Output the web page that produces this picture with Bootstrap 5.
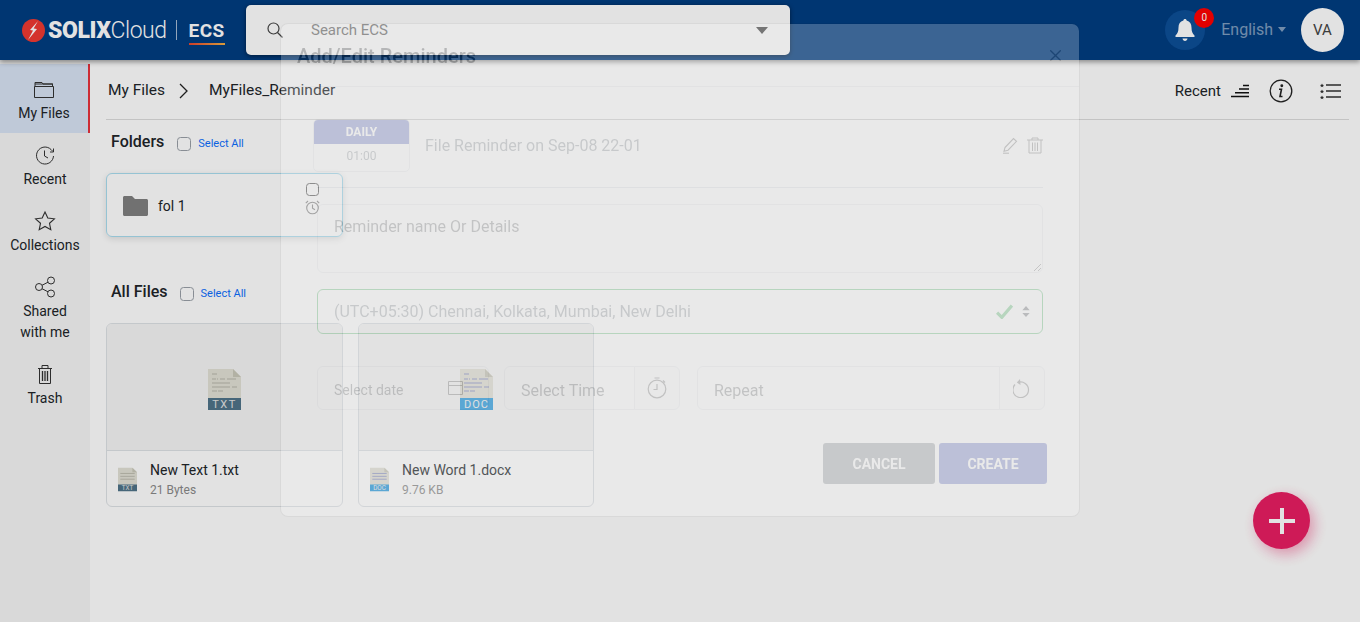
<!DOCTYPE html>
<html>
<head>
  <meta charset="utf-8">
  <title>My Files</title>
  <link href="https://cdn.jsdelivr.net/npm/bootstrap@5.3.0/dist/css/bootstrap.min.css" rel="stylesheet">
  <style>
    html, body { height: 100%; overflow: hidden; }
    body { font-family: Roboto, "Liberation Sans", sans-serif; font-size: 14px; color: #212529; background: #fff; }

    /* top bar */
    .top-bar { height: 60px; background: #003d81; box-shadow: 0 2px 5px rgba(0,0,0,.4); position: relative; z-index: 5; }
    .brand-wrap { width: 246px; padding-left: 22px; }
    .brand-name { font-size: 23px; color: #fff; margin-left: 3px; letter-spacing: -.5px; line-height: 1; }
    .brand-name b { font-weight: 900; letter-spacing: -.4px; }
    .brand-name span { font-weight: 300; }
    .brand-sep { width: 1px; height: 20px; background: rgba(255,255,255,.65); margin: 0 12px 0 9px; }
    .brand-ecs { font-size: 19px; font-weight: 700; color: #fff; letter-spacing: .5px; line-height: 1; padding: 3px 0 3px; border-bottom: 2px solid; border-image: linear-gradient(90deg,#e8432e,#f5b342) 1; margin-top: 2px; }
    .search-box { width: 544px; height: 50px; background: #fff; border-radius: 5px; box-shadow: 0 1px 4px rgba(0,0,0,.5); padding: 0 22px 0 21px; }
    .search-box span { color: #7d7d7d; font-size: 15px; margin-left: 28px; flex-grow: 1; }
    .search-caret { width: 0; height: 0; border: 6.5px solid transparent; border-top: 7px solid #555; border-bottom: 0; }
    .bell-wrap { width: 40px; height: 40px; border-radius: 50%; background: #0d4f98; position: relative; margin-right: 16px; }
    .bell-count { position: absolute; top: -2px; right: -9px; width: 20px; height: 20px; border-radius: 50%; background: #f00; color: #fff; font-size: 10px; text-align: center; line-height: 20px; }
    .lang-pick { color: rgba(255,255,255,.5); font-size: 16px; margin-right: 15px; }
    .lang-pick::after { content: ""; display: inline-block; margin-left: 5px; vertical-align: 3px; border: 4.5px solid transparent; border-top: 5px solid rgba(255,255,255,.5); border-bottom: 0; }
    .avatar-dot { width: 43px; height: 44px; border-radius: 50%; background: #fff; color: #444; font-size: 15px; margin-right: 16px; }

    /* left rail */
    .side-rail { width: 90px; background: #f5f5f5; padding-top: 4px; height: 562px; flex-shrink: 0; }
    .rail-item { padding: 10px 0 9px; text-align: center; line-height: 21px; }
    .rail-item svg { display: block; margin: 0 auto 2px; }
    .rail-item.active-rail { background: #d8e3f4; border-right: 2px solid #e8323c; padding: 13px 0 9px; }

    /* main */
    .main-col { padding: 0 11px 0 16px; }
    .crumb-row { height: 60px; border-bottom: 1px solid #dcdcdc; padding: 3px 0 0 2px; font-size: 15.5px; }
    .crumb-arrow { margin: 0 21px 0 14px; }
    .crumb-sort { font-size: 15px; }
    .sort-mark { margin: 0 20px 0 10px; }
    .info-mark { margin-right: 3px; }
    .sect-row { height: 22px; padding-left: 5px; }
    .sect-title { font-size: 16px; font-weight: 500; margin-right: 13px; }
    .sect-row .form-check-input { width: 14px; height: 14px; margin: 3px 7px 0 0; border-color: #9aa0a8; }
    .select-all { font-size: 11px; color: #0d6efd; text-decoration: none; margin-top: 4px; }
    .folder-head { margin-top: 11px; }
    .files-head { margin-top: 44px; }
    .files-head .sect-title { margin-right: 12px; }
    .folder-tile { width: 237px; height: 64px; margin-top: 20px; border: 1px solid #a9dcef; border-radius: 6px; box-shadow: 0 2px 6px rgba(0,0,0,.12); padding: 2px 22px 0 16px; }
    .folder-name { margin-left: 10px; }
    .folder-side { width: 15px; margin-top: -14px; }
    .folder-side .form-check-input { display: block; width: 13px; height: 13px; margin: 0 0 4px 1px; border-color: #777; }
    .files-grid { gap: 15px; margin-top: 20px; }
    .file-tile { height: 184px; border-color: #dee2e6; overflow: hidden; }
    .file-thumb { height: 127px; background: #f5f5f5; border-bottom: 1px solid #dee2e6; padding-top: 5px; }
    .file-meta { padding: 9px 0 0 11px; }
    .file-meta svg { margin-top: 7px; margin-right: 13px; }
    .file-name { font-size: 14px; line-height: 20px; }
    .file-size { font-size: 12px; color: #8a8a8a; line-height: 20px; }
    .add-fab { position: fixed; left: 1253px; top: 492px; width: 57px; height: 57px; border-radius: 50%; background: #e91e63; box-shadow: 4px 5px 14px rgba(233,30,99,.4); }

    /* modal, caught while fading in */
    .modal-backdrop.show { opacity: .115; }
    .fading-modal { opacity: .23; overflow: hidden; }
    .fading-modal .modal-dialog { margin: 23px auto 0; }
    .fading-modal .modal-header { height: 63px; }
    .fading-modal .modal-title { padding-top: 2px; }
    .fading-modal .btn-close { width: 11px; height: 11px; background-size: 11px; margin-right: -6px; }
    .slot-row { margin: 32px 36px 0 32px; }
    .slot-date { width: 97px; height: 53px; border: 1px solid #dee2e6; border-radius: 5px; overflow: hidden; text-align: center; }
    .slot-date b { display: block; height: 24px; line-height: 24px; background: #3f51b5; color: #fff; font-size: 12px; }
    .slot-date span { display: block; line-height: 25px; font-size: 12px; color: #6c757d; }
    .slot-title { font-size: 16px; color: #6c757d; margin-left: 15px; }
    .slot-trash { margin-left: 9px; }
    .slot-line { margin: 15px 36px 0 36px; border-top: 1px solid #ced4da; }
    .form-stack { margin: 16px 36px 0; }
    .form-stack textarea { height: 69px; padding: 10px 16px 0; }
    .form-stack .form-control, .form-stack .form-select { font-size: 16px; }
    .zone-select.form-select { height: 45px; margin-top: 16px; padding-left: 16px; color: #6c757d; border-color: #28a745;
      background-image: url("data:image/svg+xml,%3csvg xmlns='http://www.w3.org/2000/svg' viewBox='0 0 8 12'%3e%3cpath fill='%23343a40' d='M4 0 8 4.500H0zM4 12 0 7.500h8z'/%3e%3c/svg%3e"), url("data:image/svg+xml,%3csvg xmlns='http://www.w3.org/2000/svg' viewBox='0 0 16 14'%3e%3cpath fill='none' stroke='%2328a745' stroke-width='3' d='M1 8l4.500 4.500L15 1.500'/%3e%3c/svg%3e");
      background-position: right 12px center, right 29px center; background-size: 8px 11px, 17px 15px; background-repeat: no-repeat; }
    .time-row { margin: 32px 34px 0 36px; }
    .time-row .form-control { height: 44px; padding: 8px 16px 4px; }
    .date-wrap { width: 172px; position: relative; margin-right: 15px; }
    .date-wrap .form-control { font-size: 14px; }
    .date-wrap svg { position: absolute; right: 26px; top: 14px; }
    .time-wrap { width: 176px; margin-right: 17px; }
    .repeat-wrap { width: 348px; }
    .time-row .input-group-text { width: 46px; justify-content: center; padding: 0; }
    .btn-row { margin: 33px 32px 32px 0; }
    .btn-row .btn { height: 41px; font-size: 14px; font-weight: 700; border: 0; border-radius: 3px; padding-top: 8px; }
    .btn-cancel { width: 112px; margin-right: 4px; }
    .btn-create { width: 108px; background: #3f51b5; color: #fff; }
    .btn-create:hover { background: #3f51b5; color: #fff; }
  </style>
</head>
<body>

<header class="top-bar d-flex align-items-center">
  <div class="brand-wrap d-flex align-items-center">
    <svg width="23" height="23" viewBox="0 0 23 23"><circle cx="11.5" cy="11.5" r="11.5" fill="#f03a32"/><path d="M16 2 8 11l3 .5L6 21l9-11-3.400-.5z" fill="#fff"/></svg>
    <div class="brand-name"><b>SOLIX</b><span>Cloud</span></div>
    <div class="brand-sep"></div>
    <div class="brand-ecs">ECS</div>
  </div>
  <div class="search-box d-flex align-items-center">
    <svg width="16" height="16" viewBox="0 0 16 16" fill="none" stroke="#444" stroke-width="1.200"><circle cx="6.500" cy="6.500" r="5.500"/><path d="M10.500 10.500 15.500 15.500"/></svg>
    <span>Search ECS</span>
    <div class="search-caret"></div>
  </div>
  <div class="ms-auto d-flex align-items-center">
    <div class="bell-wrap d-flex align-items-center justify-content-center">
      <svg width="20" height="24" viewBox="0 0 20 24" fill="#fff"><path d="M10 1c1 0 1.600.7 1.600 1.600C15 3.400 16.500 6 16.500 9.500c0 4 1 6 3 8v1.500H.5v-1.500c2-2 3-4 3-8C3.500 6 5 3.400 8.400 2.600 8.400 1.700 9 1 10 1z"/><path d="M7.500 20.500h5C12.300 22 11.300 23 10 23s-2.300-1-2.500-2.500z"/></svg>
      <div class="bell-count">0</div>
    </div>
    <div class="lang-pick">English</div>
    <div class="avatar-dot d-flex align-items-center justify-content-center">VA</div>
  </div>
</header>

<div class="d-flex">
  <nav class="side-rail">
    <div class="rail-item active-rail">
      <svg width="24" height="24" viewBox="0 0 24 24" fill="none" stroke="#333" stroke-width="1"><path d="M3 7V5.500h7l1 1.500h9.500v2"/><path d="M2.500 9.500h19v11h-19z"/><path d="M3 9.500V7h18"/></svg>
      My Files
    </div>
    <div class="rail-item">
      <svg width="24" height="24" viewBox="0 0 24 24" fill="none" stroke="#333" stroke-width="1"><path d="M20.500 13a8.500 8.500 0 1 1-2.500-6.500l2 2"/><path d="M20.500 5.500v3.500H17"/><path d="M11.500 7.500V13l3.500 2"/></svg>
      Recent
    </div>
    <div class="rail-item">
      <svg width="24" height="24" viewBox="0 0 24 24" fill="none" stroke="#333" stroke-width="1.100"><path d="M12 3l2.800 6 6.600.8-4.900 4.500 1.300 6.500L12 17.500 6.200 20.800l1.300-6.500L2.600 9.800 9.200 9z"/></svg>
      Collections
    </div>
    <div class="rail-item">
      <svg width="24" height="24" viewBox="0 0 24 24" fill="none" stroke="#333" stroke-width="1"><circle cx="18" cy="5.500" r="3.500"/><circle cx="18" cy="18.500" r="3.500"/><circle cx="6" cy="12" r="3.500"/><path d="M9 10.300 15 7.200M9 13.700l6 3.100"/></svg>
      Shared<br>with me
    </div>
    <div class="rail-item">
      <svg width="24" height="24" viewBox="0 0 24 24" fill="none" stroke="#333" stroke-width="1"><path d="M5 6.500h14M9 6V3.500h6V6M6.500 6.500v15h11v-15"/><path d="M9.500 9v10M12 9v10M14.500 9v10" stroke-width="1.300"/></svg>
      Trash
    </div>
  </nav>

  <main class="main-col flex-grow-1">
    <div class="crumb-row d-flex align-items-center">
      <span>My Files</span>
      <svg class="crumb-arrow" width="9" height="16" viewBox="0 0 9 16" fill="none" stroke="#222" stroke-width="1.300"><path d="M1 1l7 7-7 7"/></svg>
      <span>MyFiles_Reminder</span>
      <span class="crumb-sort ms-auto">Recent</span>
      <svg class="sort-mark" width="18" height="14" viewBox="0 0 18 14" stroke="#111" stroke-width="1.600"><path d="M12 1.500h6M8 5h10M4 8.700h14M0 12.500h18"/></svg>
      <svg class="info-mark" width="24" height="24" viewBox="0 0 24 24" fill="none" stroke="#222" stroke-width="1.300"><circle cx="12" cy="12" r="10.800"/><path d="M10 10.200h2.500L11 17.500h2.500" stroke-width="1.600"/><circle cx="12.800" cy="6.800" r=".8" fill="#222"/></svg>
      <svg class="ms-4 me-2" width="21" height="18" viewBox="0 0 21 18" stroke="#333" stroke-width="1.300"><path d="M6 3h15M6 9h15M6 15h15"/><path d="M2 1.500l.6 1.300 1.400.2-1 .9.300 1.400L2 4.600.7 5.300 1 3.900 0 3l1.400-.2zM2 7.500l.6 1.300 1.400.2-1 .9.300 1.400L2 10.600l-1.300.7.300-1.400-1-.9 1.400-.2zM2 13.500l.6 1.300 1.400.2-1 .9.300 1.400L2 16.600l-1.300.7.300-1.400-1-.9 1.400-.2z" fill="#333" stroke="none"/></svg>
    </div>

    <div class="sect-row folder-head d-flex align-items-center">
      <span class="sect-title">Folders</span>
      <input class="form-check-input" type="checkbox">
      <a href="#" class="select-all">Select All</a>
    </div>
    <div class="folder-tile d-flex align-items-center">
      <svg width="25" height="20" viewBox="0 0 25 20" fill="#808080"><path d="M1.500 0h7.500l3 3h11.500c.8 0 1.500.7 1.500 1.500v14c0 .8-.7 1.500-1.500 1.500h-22C.7 20 0 19.300 0 18.500v-17C0 .7.700 0 1.500 0z"/></svg>
      <span class="folder-name flex-grow-1">fol 1</span>
      <div class="folder-side">
        <input class="form-check-input" type="checkbox">
        <svg class="d-block" width="15" height="15" viewBox="0 0 15 15" fill="none" stroke="#999" stroke-width="1.100"><circle cx="7.500" cy="8" r="5.800"/><path d="M7.500 4.500V8.300l2.500 1.500M.8 3.200 3 1M14.200 3.200 12 1"/></svg>
      </div>
    </div>

    <div class="sect-row files-head d-flex align-items-center">
      <span class="sect-title">All Files</span>
      <input class="form-check-input" type="checkbox">
      <a href="#" class="select-all">Select All</a>
    </div>
    <div class="files-grid d-flex">
      <div class="card file-tile" style="width: 237px">
        <div class="file-thumb d-flex align-items-center justify-content-center">
          <svg width="33" height="41" viewBox="0 0 33 41"><path d="M0 0h25l8 8v25H0z" fill="#e2e1d6"/><path d="M25 0l8 8h-8z" fill="#c9c8ba"/><path d="M4 5h5M4 10h4m1 0h1m2 0h5m2 0h9M4 14h18M4 18h18m2 0h5M4 22h5m1 0h5" stroke="#b8b7aa" stroke-width="1.200"/><path d="M0 29h33v12H0z" fill="#4f7489"/><text x="16.500" y="39" fill="#e4e4e4" font-size="11" text-anchor="middle" font-family="Roboto" letter-spacing="1.500">TXT</text></svg>
        </div>
        <div class="file-meta d-flex">
          <svg width="19" height="25" viewBox="0 0 33 41"><path d="M0 0h25l8 8v25H0z" fill="#e2e1d6"/><path d="M25 0l8 8h-8z" fill="#c9c8ba"/><path d="M4 10h25M4 15h25M4 20h25" stroke="#b8b7aa" stroke-width="1.500"/><path d="M0 29h33v12H0z" fill="#4f7489"/><text x="16.500" y="39" fill="#e4e4e4" font-size="11" text-anchor="middle" font-family="Roboto">TXT</text></svg>
          <div>
            <div class="file-name">New Text 1.txt</div>
            <div class="file-size">21 Bytes</div>
          </div>
        </div>
      </div>
      <div class="card file-tile" style="width: 236px">
        <div class="file-thumb d-flex align-items-center justify-content-center">
          <svg width="33" height="41" viewBox="0 0 33 41"><path d="M0 0h25l8 8v25H0z" fill="#e2e1d6"/><path d="M25 0l8 8h-8z" fill="#c9c8ba"/><path d="M4 5h5M4 10h4m1 0h1m2 0h5m2 0h9M4 14h18M4 18h18m2 0h5M4 22h5m1 0h5" stroke="#8f97c8" stroke-width="1.200"/><path d="M0 29h33v12H0z" fill="#2f9fe0"/><text x="16.500" y="39" fill="#f0f0f0" font-size="11" text-anchor="middle" font-family="Roboto" letter-spacing="1">DOC</text></svg>
        </div>
        <div class="file-meta d-flex">
          <svg width="19" height="25" viewBox="0 0 33 41"><path d="M0 0h25l8 8v25H0z" fill="#e2e1d6"/><path d="M25 0l8 8h-8z" fill="#c9c8ba"/><path d="M4 10h25M4 15h25M4 20h25" stroke="#8f97c8" stroke-width="1.500"/><path d="M0 29h33v12H0z" fill="#2f9fe0"/><text x="16.500" y="39" fill="#f0f0f0" font-size="11" text-anchor="middle" font-family="Roboto">DOC</text></svg>
          <div>
            <div class="file-name">New Word 1.docx</div>
            <div class="file-size">9.76 KB</div>
          </div>
        </div>
      </div>
    </div>
  </main>
</div>

<button class="add-fab btn p-0 d-flex align-items-center justify-content-center" type="button">
  <svg width="26" height="26" viewBox="0 0 26 26" stroke="#fff" stroke-width="4"><path d="M13 0v26M0 13h26"/></svg>
</button>

<div class="modal-backdrop show"></div>
<div class="modal d-block fading-modal">
  <div class="modal-dialog modal-lg">
    <div class="modal-content">
      <div class="modal-header">
        <h5 class="modal-title">Add/Edit Reminders</h5>
        <button type="button" class="btn-close"></button>
      </div>
      <div class="slot-row d-flex align-items-center">
        <div class="slot-date">
          <b>DAILY</b>
          <span>01:00</span>
        </div>
        <div class="slot-title flex-grow-1">File Reminder on Sep-08 22-01</div>
        <svg width="16" height="17" viewBox="0 0 16 17" fill="none" stroke="#555" stroke-width="1.100"><path d="M3 10.500 11.500 1.500l3 2.800L6 13.200l-4 1z"/><path d="M1 16.200h6"/></svg>
        <svg class="slot-trash" width="16" height="17" viewBox="0 0 16 17" fill="none" stroke="#555" stroke-width="1"><path d="M0 3h16M5 3V1h6v2M2 3v13h12V3M5.500 5.500V14M8 5.500V14M10.500 5.500V14"/></svg>
      </div>
      <div class="slot-line"></div>
      <div class="form-stack">
        <textarea class="form-control" placeholder="Reminder name Or Details"></textarea>
        <select class="form-select zone-select">
          <option>(UTC+05:30) Chennai, Kolkata, Mumbai, New Delhi</option>
        </select>
      </div>
      <div class="time-row d-flex">
        <div class="date-wrap">
          <input class="form-control" placeholder="Select date">
          <svg width="15" height="15" viewBox="0 0 15 15" fill="none" stroke="#555"><path d="M.5 1.500h14v13H.5zM.5 5.500h14"/></svg>
        </div>
        <div class="input-group time-wrap flex-nowrap">
          <input class="form-control" placeholder="Select Time">
          <span class="input-group-text">
            <svg width="20" height="22" viewBox="0 0 20 22" fill="none" stroke="#555" stroke-width="1.200"><circle cx="10" cy="12" r="8.800"/><path d="M10 7v5.500H6.500M7.500 1h5M16 3.500l2 2"/></svg>
          </span>
        </div>
        <div class="input-group repeat-wrap flex-nowrap">
          <input class="form-control" placeholder="Repeat">
          <span class="input-group-text">
            <svg width="18" height="20" viewBox="0 0 18 20" fill="none" stroke="#555" stroke-width="1.200"><path d="M5 4.500A7.800 7.800 0 1 1 2 6.500"/><path d="M7 1 3.800 4.600l3.700 2.300" fill="#555" stroke="none"/></svg>
          </span>
        </div>
      </div>
      <div class="btn-row d-flex justify-content-end">
        <button class="btn btn-secondary btn-cancel" type="button">CANCEL</button>
        <button class="btn btn-create" type="button">CREATE</button>
      </div>
    </div>
  </div>
</div>

<script src="https://cdn.jsdelivr.net/npm/bootstrap@5.3.0/dist/js/bootstrap.bundle.min.js"></script>
</body>
</html>
